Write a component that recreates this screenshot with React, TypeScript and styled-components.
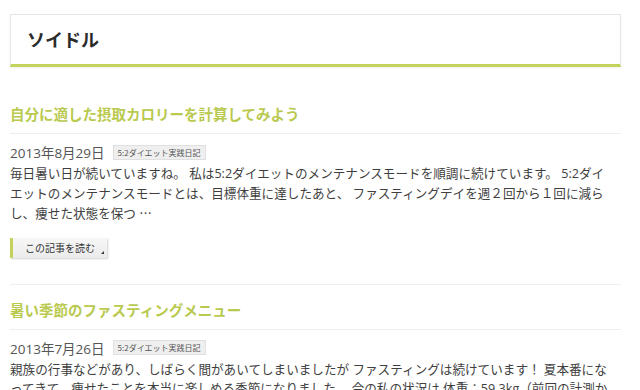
import React from "react";
import styled, { createGlobalStyle } from "styled-components";

const Global = createGlobalStyle`
  html, body { margin: 0; padding: 0; background: #fff; }
  body { font-family: "Open Sans", "Noto Sans CJK JP", sans-serif; color: #444; }
`;

const Page = styled.div`
  width: 611px;
  padding: 14px 0 0 10px;
  display: flex;
  flex-direction: column;
`;

const HeaderBox = styled.header`
  border: 1px solid #e6e6e6;
  border-bottom: 3px solid #c3d35c;
  box-shadow: 0 1px 2px rgba(0,0,0,0.06);
  display: flex;
  align-items: center;
  padding-left: 16px;
  box-sizing: border-box;
  height: 53px;
`;

const SiteTitle = styled.h1`
  margin: 0;
  font-family: "Noto Sans CJK JP", sans-serif;
  font-size: 18px;
  font-weight: 700;
  color: #2b2b2b;
  padding-bottom: 2px;
`;

const Article = styled.article<{ $first?: boolean }>`
  padding-top: ${(p) => (p.$first ? "36px" : "14px")};
  border-bottom: ${(p) => (p.$first ? "1px solid #eee" : "none")};
  padding-bottom: ${(p) => (p.$first ? "26px" : "0")};
`;

const PostTitle = styled.h2`
  margin: 0;
  font-family: "Noto Sans CJK JP", sans-serif;
  font-size: 14.5px;
  font-weight: 700;
  color: #b9ca4f;
  line-height: 22px;
  padding-bottom: 8px;
  border-bottom: 1px solid #eee;
`;

const Meta = styled.div`
  display: flex;
  align-items: center;
  gap: 8px;
  margin-top: 8px;
  height: 20px;
`;

const DateText = styled.span`
  font-size: 13.5px;
  color: #555;
`;

const Tag = styled.span`
  font-family: "Noto Sans CJK JP", sans-serif;
  font-size: 8px;
  color: #555;
  background: #efefef;
  border: 1px solid #e0e0e0;
  padding: 1px 4px;
  line-height: 11px;
`;

const Body = styled.p`
  margin: 2px 0 0;
  font-size: 12.6px;
  line-height: 19.5px;
  color: #3f3f3f;
  white-space: nowrap;
`;

const Ellipsis = styled.span`
  font-family: "Noto Sans CJK JP", sans-serif;
`;

const ReadMore = styled.a`
  position: relative;
  display: inline-flex;
  align-items: center;
  margin-top: 14px;
  height: 20px;
  padding: 0 12px 0 12px;
  background: linear-gradient(#f7f7f7, #ebebeb);
  border-left: 3px solid #c3d35c;
  box-shadow: 1px 1px 2px rgba(0,0,0,0.18);
  font-family: "Noto Sans CJK JP", sans-serif;
  font-size: 10px;
  color: #333;
  text-decoration: none;
  &::after {
    content: "";
    position: absolute;
    right: 3px;
    bottom: 4px;
    border-left: 3px solid transparent;
    border-bottom: 3px solid #333;
  }
`;

const ButtonRow = styled.div`
  display: flex;
`;

export default function App() {
  return (
    <>
      <Global />
      <Page>
        <HeaderBox>
          <SiteTitle>ソイドル</SiteTitle>
        </HeaderBox>
        <Article $first>
          <PostTitle>自分に適した摂取カロリーを計算してみよう</PostTitle>
          <Meta>
            <DateText>2013年8月29日</DateText>
            <Tag>5:2ダイエット実践日記</Tag>
          </Meta>
          <Body>
            毎日暑い日が続いていますね。 私は5:2ダイエットのメンテナンスモードを順調に続けています。 5:2ダイ
            <br />
            エットのメンテナンスモードとは、目標体重に達したあと、 ファスティングデイを週２回から１回に減ら
            <br />
            し、痩せた状態を保つ <Ellipsis>…</Ellipsis>
          </Body>
          <ButtonRow>
            <ReadMore href="#">この記事を読む</ReadMore>
          </ButtonRow>
        </Article>
        <Article>
          <PostTitle>暑い季節のファスティングメニュー</PostTitle>
          <Meta>
            <DateText>2013年7月26日</DateText>
            <Tag>5:2ダイエット実践日記</Tag>
          </Meta>
          <Body>
            親族の行事などがあり、しばらく間があいてしまいましたが ファスティングは続けています！ 夏本番にな
            <br />
            ってきて、痩せたことを本当に楽しめる季節になりました。 今の私の状況は 体重：59.3kg（前回の計測か
          </Body>
        </Article>
      </Page>
    </>
  );
}
